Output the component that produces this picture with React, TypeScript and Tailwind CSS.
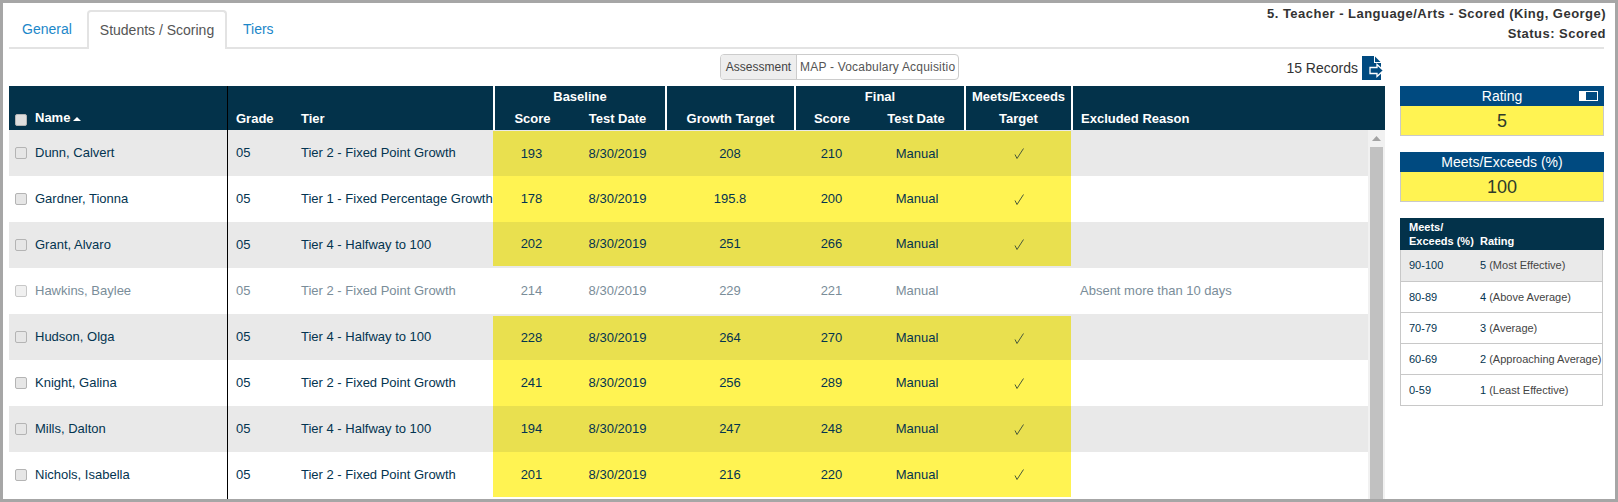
const SANS = "font-['Liberation_Sans',Arial,sans-serif]";

const rows = [
  { name: "Dunn, Calvert", tier: "Tier 2 - Fixed Point Growth", base: "193", target: "208", final: "210", met: true, edge: "mt-[1px]" },
  { name: "Gardner, Tionna", tier: "Tier 1 - Fixed Percentage Growth", base: "178", target: "195.8", final: "200", met: true, edge: "" },
  { name: "Grant, Alvaro", tier: "Tier 4 - Halfway to 100", base: "202", target: "251", final: "266", met: true, edge: "mb-[2px]" },
  { name: "Hawkins, Baylee", tier: "Tier 2 - Fixed Point Growth", base: "214", target: "229", final: "221", met: false, reason: "Absent more than 10 days", edge: "" },
  { name: "Hudson, Olga", tier: "Tier 4 - Halfway to 100", base: "228", target: "264", final: "270", met: true, edge: "mt-[2px]" },
  { name: "Knight, Galina", tier: "Tier 2 - Fixed Point Growth", base: "241", target: "256", final: "289", met: true, edge: "" },
  { name: "Mills, Dalton", tier: "Tier 4 - Halfway to 100", base: "194", target: "247", final: "248", met: true, edge: "" },
  { name: "Nichols, Isabella", tier: "Tier 2 - Fixed Point Growth", base: "201", target: "216", final: "220", met: true, edge: "mb-[1px]" },
];

const scale = [
  ["90-100", "5", "(Most Effective)"],
  ["80-89", "4", "(Above Average)"],
  ["70-79", "3", "(Average)"],
  ["60-69", "2", "(Approaching Average)"],
  ["0-59", "1", "(Least Effective)"],
];

function Tick() {
  return (
    <svg width="10" height="11" viewBox="0 0 10 11">
      <path d="M1 6.5L3 10.5L9.5 0.5" fill="none" stroke="#4a5a3a" strokeWidth="1" />
    </svg>
  );
}

function ScorePanel({ title, value, toggle }: { title: string; value: string; toggle?: boolean }) {
  return (
    <div className="w-[204px]">
      <div className="relative flex h-5 items-center justify-center bg-[#004a80] text-[14px] text-white">
        {title}
        {toggle && (
          <span className="absolute right-[6px] top-[5px] flex h-[10px] w-[19px] border border-white">
            <span className="w-[6px] bg-white" />
          </span>
        )}
      </div>
      <div className="flex h-[30px] items-center justify-center border border-t-0 border-[#c9c9c9] bg-[#fff352] pt-[1px] text-[18px] text-[#2f3b2a]">
        {value}
      </div>
    </div>
  );
}

export default function App() {
  return (
    <div className={`${SANS} h-[502px] w-[1618px] overflow-hidden border-[3px] border-[#a6a6a6] bg-white pl-[6px] pr-[11px] text-[13px] text-[#033450]`}>
      <div className="flex h-[46px] items-start justify-between border-b-2 border-[#e3e3e3]">
        <div className="mt-[7px] flex h-[39px] items-stretch text-[14px]">
          <span className="flex w-[78px] items-center pl-[13px] text-[#1c87c9]">General</span>
          <span className="flex w-[140px] items-center justify-center rounded-t-[4px] border-2 border-b-0 border-[#e3e3e3] bg-white text-[#555]">Students / Scoring</span>
          <span className="flex items-center pl-[16px] text-[#1c87c9]">Tiers</span>
        </div>
        <div className="mr-[-2px] pt-[1px] text-right text-[13px] font-bold leading-[20px] tracking-[0.47px] text-[#333]">
          <div>5. Teacher - Language/Arts - Scored (King, George)</div>
          <div>Status: Scored</div>
        </div>
      </div>

      <div className="flex">
        <div className="w-[1376px]">
          <div className="relative flex h-[37px] items-start justify-end">
            <div className="absolute left-[711px] top-[5px] flex h-[26px] w-[239px] overflow-hidden rounded-[4px] border border-[#cccccc] text-[12px] leading-[24px]">
              <span className="w-[76px] border-r border-[#cccccc] bg-[#eeeeee] text-center text-[#444]">Assessment</span>
              <span className="flex-1 whitespace-nowrap pl-[3px] tracking-[0.2px] text-[#555]">MAP - Vocabulary Acquisitio</span>
            </div>
            <div className="mt-[7px] mr-[1px] flex items-center gap-[4px]">
              <span className="text-[14px] text-[#333]">15 Records</span>
              <svg width="22" height="24" viewBox="0 0 22 24">
                <path d="M0 0H12V7H19V24H0Z" fill="#004a80" />
                <path d="M13 0.5L18.5 6H13Z" fill="#004a80" />
                <path d="M8 11.5H15V8.5L21.5 14.5L15 20.5V17.5H8Z" fill="#004a80" stroke="#fff" strokeWidth="1.3" />
              </svg>
            </div>
          </div>

          <div className="grid h-[44px] grid-cols-[219px_65px_200px_172px_129px_170px_107px_1fr] grid-rows-2 bg-[#03324a] font-bold leading-[22px] text-white">
            <div className="row-span-2 flex items-end border-r border-black pb-[1px] pl-[6px]">
              <span className="mb-[3px] block h-3 w-3 rounded-[2px] border border-[#b4b4b4] bg-[#dedede]" />
              <span className="ml-[8px]">Name</span>
              <svg className="mb-[8px] ml-[3px]" width="8" height="4" viewBox="0 0 8 4"><path d="M0 4L4 0L8 4Z" fill="#fff" /></svg>
            </div>
            <div className="row-span-2 flex items-end pl-[8px]">Grade</div>
            <div className="row-span-2 flex items-end pl-[8px]">Tier</div>
            <div className="border-l-2 border-white text-center">Baseline</div>
            <div className="row-span-2 flex items-end justify-center border-l-2 border-white">Growth Target</div>
            <div className="border-l-2 border-white text-center">Final</div>
            <div className="whitespace-nowrap border-l-2 border-white text-center">Meets/Exceeds</div>
            <div className="row-span-2 flex items-end border-l-2 border-white pl-[8px]">Excluded Reason</div>
            <div className="col-start-4 row-start-2 grid grid-cols-[75px_1fr] border-l-2 border-white text-center"><span>Score</span><span>Test Date</span></div>
            <div className="col-start-6 row-start-2 grid grid-cols-[72px_1fr] border-l-2 border-white text-center"><span>Score</span><span>Test Date</span></div>
            <div className="col-start-7 row-start-2 border-l-2 border-white text-center">Target</div>
          </div>

          <div className="flex h-[369px]">
            <div className="flex-1">
              {rows.map((r, i) => {
                const odd = i % 2 === 0;
                const ex = !r.met;
                const yellow = ex ? "" : odd ? "bg-[#e9e04f]" : "bg-[#fff352]";
                const cell = `flex items-center justify-center ${r.edge} ${yellow}`;
                return (
                  <div key={r.name} className={`grid h-[46px] grid-cols-[219px_65px_200px_77px_95px_130px_73px_98px_105px_1fr] items-stretch ${odd ? "bg-[#e9e9e9]" : "bg-white"} ${ex ? "text-[#7a8d99]" : ""}`}>
                    <div className="flex items-center border-r border-black pl-[6px]">
                      <span className={`block h-3 w-3 rounded-[2px] border ${ex ? "border-[#c8c8c8] bg-[#f0f0f0]" : "border-[#b4b4b4] bg-[#e6e6e6]"}`} />
                      <span className="ml-[8px]">{r.name}</span>
                    </div>
                    <div className="flex items-center pl-[8px]">05</div>
                    <div className="flex items-center whitespace-nowrap pl-[8px]">{r.tier}</div>
                    <div className={cell}>{r.base}</div>
                    <div className={cell}>8/30/2019</div>
                    <div className={cell}>{r.target}</div>
                    <div className={cell}>{r.final}</div>
                    <div className={cell}>Manual</div>
                    <div className={cell}>{r.met ? <Tick /> : null}</div>
                    <div className="flex items-center pl-[9px]">{r.reason}</div>
                  </div>
                );
              })}
              <div className="h-px w-[219px] border-r border-black" />
            </div>
            <div className="flex w-[17px] flex-col items-center bg-[#f1f1f1]">
              <svg className="mt-[6px]" width="9" height="5" viewBox="0 0 9 5"><path d="M0 5L4.5 0L9 5Z" fill="#a3a3a3" /></svg>
              <div className="mt-[6px] w-[13px] flex-1 bg-[#c1c1c1]" />
            </div>
          </div>
        </div>

        <div className="ml-[15px] flex flex-col gap-4 pt-[37px]">
          <ScorePanel title="Rating" value="5" toggle />
          <ScorePanel title="Meets/Exceeds (%)" value="100" />
          <div className="w-[204px] text-[11px] leading-[14px]">
            <div className="flex h-[32px] items-end bg-[#03324a] pb-[2px] pl-[9px] font-bold text-white">
              <span className="w-[71px]">Meets/<br />Exceeds (%)</span>
              <span>Rating</span>
            </div>
            <div className="mr-px border-x border-b border-[#c8c8c8]">
              {scale.map(([a, b, c], i) => (
                <div key={a} className={`flex h-[31px] items-center pb-[1px] pl-[8px] ${i ? "border-t border-[#c8c8c8]" : "bg-[#eaeaea]"}`}>
                  <span className="w-[71px]">{a}</span>
                  <span className="whitespace-nowrap">{b} <span className="text-[#444]">{c}</span></span>
                </div>
              ))}
            </div>
          </div>
        </div>
      </div>
    </div>
  );
}
